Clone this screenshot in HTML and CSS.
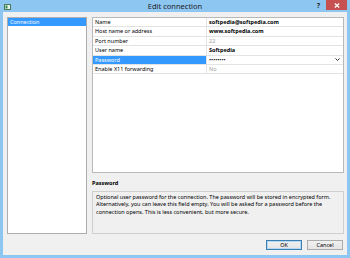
FILE: index.html
```html
<!DOCTYPE html>
<html>
<head>
<meta charset="utf-8">
<link rel="stylesheet" href="styles.css">
</head>
<body>
<div class="window">
  <div class="titlebar">
    <svg class="appicon" width="7" height="6" viewBox="0 0 7 6"><rect x="0.5" y="0.5" width="6" height="5" fill="#e8f2ea" stroke="#4a7a5a"/><rect x="1.5" y="1.5" width="2" height="3" fill="#2e8b57"/></svg>
    <div class="title">Edit connection</div>
    <div class="help">?</div>
    <div class="close"><svg width="6" height="5" viewBox="0 0 6 5"><path d="M0.8 0.5 L5.2 4.5 M5.2 0.5 L0.8 4.5" stroke="#fff" stroke-width="1.3" fill="none"/></svg></div>
  </div>
  <div class="client">
    <div class="main">
      <div class="listbox">
        <div class="item selected">Connection</div>
      </div>
      <div class="right">
        <div class="grid">
          <div class="row"><div class="name">Name</div><div class="value bold">softpedia@softpedia.com</div></div>
          <div class="row"><div class="name">Host name or address</div><div class="value bold">www.softpedia.com</div></div>
          <div class="row"><div class="name">Port number</div><div class="value dim">22</div></div>
          <div class="row"><div class="name">User name</div><div class="value bold">Softpedia</div></div>
          <div class="row"><div class="name sel">Password</div><div class="value combo"><span class="dots">••••••••</span><svg class="chev" width="5" height="3" viewBox="0 0 5 3"><path d="M0.5 0.5 L2.5 2.5 L4.5 0.5" fill="none" stroke="#333" stroke-width="1"/></svg></div></div>
          <div class="row"><div class="name">Enable X11 forwarding</div><div class="value dim">No</div></div>
        </div>
        <div class="desc-title">Password</div>
        <div class="desc">Optional user password for the connection. The password will be stored in encrypted form.<br>Alternatively, you can leave this field empty. You will be asked for a password before the<br>connection opens. This is less convenient, but more secure.</div>
      </div>
    </div>
    <div class="buttons">
      <div class="btn default">OK</div>
      <div class="btn">Cancel</div>
    </div>
  </div>
</div>
</body>
</html>
```
FILE: styles.css
```css
* { box-sizing: border-box; }
html, body { margin: 0; padding: 0; }
body {
  font-family: "Noto Sans", "Open Sans", sans-serif;
  font-size: 5.5px;
  color: #000;
}
.window {
  width: 350px;
  height: 258px;
  background: #8ec6f2;
  padding: 0 3px 3px 3px;
  display: flex;
  flex-direction: column;
}
.titlebar {
  height: 13px;
  display: flex;
  align-items: flex-start;
  position: relative;
}
.appicon { margin: 4px 0 0 1px; }
.title {
  position: absolute;
  left: 0; right: 0;
  top: 1px;
  text-align: center;
  font-size: 7.5px;
  color: #1a1a1a;
  line-height: 10px;
}
.help {
  margin-left: auto;
  margin-top: 1px;
  font-size: 7px;
  font-weight: bold;
  color: #222;
  line-height: 9px;
  margin-right: 6px;
}
.close {
  width: 21px;
  height: 10px;
  background: #c75050;
  display: flex;
  align-items: center;
  justify-content: center;
}
.client {
  flex: 1;
  background: #f0f0f0;
  padding: 5px 3px 5px 4px;
  display: flex;
  flex-direction: column;
}
.main {
  display: flex;
  gap: 5px;
  height: 217px;
}
.listbox {
  width: 80px;
  background: #fff;
  border: 1px solid #abadb3;
  padding: 0;
}
.item {
  height: 8px;
  line-height: 8px;
  padding-left: 2px;
}
.item.selected {
  background: #3399ff;
  color: #fff;
}
.right {
  flex: 1;
  display: flex;
  flex-direction: column;
}
.grid {
  height: 156px;
  background: #fff;
  border: 1px solid #b9b9b9;
}
.row {
  display: flex;
  height: 9.4px;
  border-bottom: 1px solid #e3e3e3;
}
.name {
  width: 114px;
  border-right: 1px solid #e3e3e3;
  padding-left: 2px;
  line-height: 8.4px;
  white-space: nowrap;
}
.name.sel {
  background: #3399ff;
  color: #fff;
}
.value {
  flex: 1;
  padding-left: 2px;
  line-height: 8.4px;
  white-space: nowrap;
}
.bold { font-weight: bold; }
.dim { color: #a0a0a0; }
.combo {
  display: flex;
  align-items: center;
  padding-right: 3px;
}
.dots { letter-spacing: 0; }
.chev { margin-left: auto; }
.desc-title {
  font-weight: bold;
  margin-top: 6px;
  height: 12px;
  line-height: 8px;
}
.desc {
  flex: 1;
  border: 1px solid #cfcfcf;
  padding: 2px 3px;
  line-height: 7.4px;
  white-space: nowrap;
}
.buttons {
  display: flex;
  justify-content: flex-end;
  gap: 5px;
  margin-top: 6px;
  padding-right: 1px;
}
.btn {
  width: 36px;
  height: 10px;
  border: 1px solid #acacac;
  background: linear-gradient(#f0f0f0, #e5e5e5);
  text-align: center;
  line-height: 8px;
}
.btn.default {
  border-color: #3c7fb1;
  box-shadow: inset 0 0 0 1px #b4d7f5;
}
```
